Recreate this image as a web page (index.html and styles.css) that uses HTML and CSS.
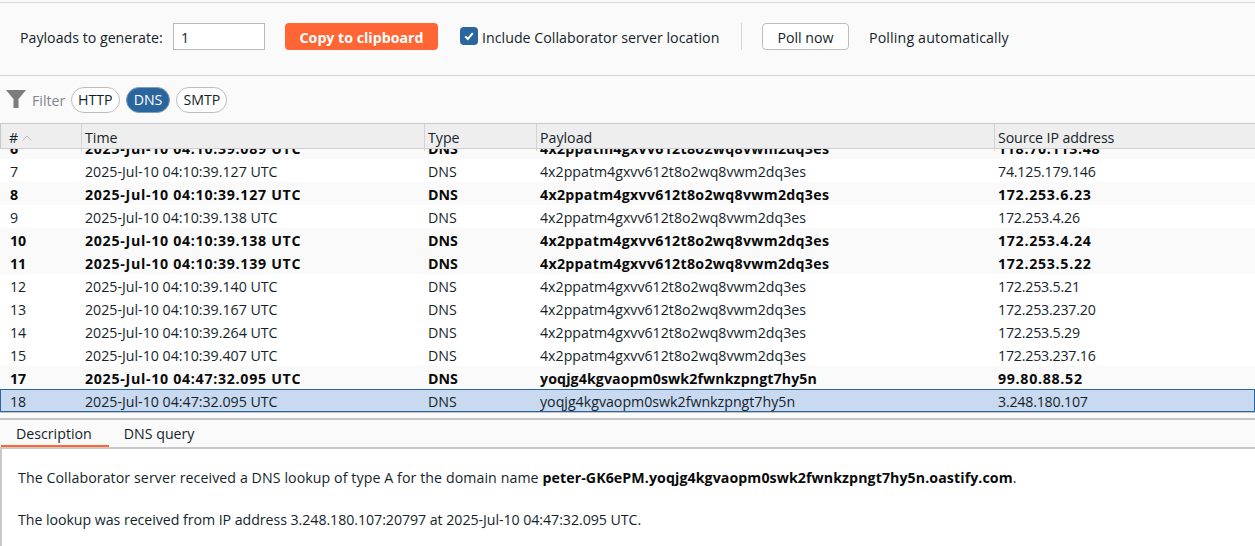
FILE: index.html
```html
<!DOCTYPE html>
<html lang="en">
<head>
    <meta charset="UTF-8">
    <title>Collaborator</title>
    <link rel="stylesheet" href="styles.css">
</head>
<body>
    <div class="toolbar">
        <label class="field-label" for="payloadCount">Payloads to generate:</label>
        <input class="count-input" id="payloadCount" type="text" value="1">
        <button class="copy-btn">Copy to clipboard</button>
        <span class="check-box">
            <svg width="12" height="12" viewBox="0 0 12 12"><path d="M2.2 6.4 L4.8 9 L9.8 3.2" fill="none" stroke="#fff" stroke-width="2"/></svg>
        </span>
        <span class="check-label">Include Collaborator server location</span>
        <span class="divider"></span>
        <button class="poll-btn">Poll now</button>
        <span class="poll-status">Polling automatically</span>
    </div>

    <div class="filter-bar">
        <svg class="filter-icon" width="20" height="20" viewBox="0 0 20 20"><path d="M0 0 H20 L12.5 9 V18 H7.5 V9 Z" fill="#7c7c7c"/></svg>
        <span class="filter-label">Filter</span>
        <span class="pill">HTTP</span>
        <span class="pill pill-on">DNS</span>
        <span class="pill">SMTP</span>
    </div>

    <div class="table">
        <div class="row head">
            <div class="cell">#<svg class="sort-icon" width="10" height="6" viewBox="0 0 10 6"><path d="M0.5 5.5 L5 1 L9.5 5.5" fill="none" stroke="#bbb"/></svg></div>
            <div class="cell">Time</div>
            <div class="cell">Type</div>
            <div class="cell">Payload</div>
            <div class="cell">Source IP address</div>
        </div>
        <div class="table-body">
            <div class="scroller">
                <div class="row bold"><div class="cell">6</div><div class="cell">2025-Jul-10 04:10:39.089 UTC</div><div class="cell">DNS</div><div class="cell">4x2ppatm4gxvv612t8o2wq8vwm2dq3es</div><div class="cell">118.70.113.48</div></div>
                <div class="row"><div class="cell">7</div><div class="cell">2025-Jul-10 04:10:39.127 UTC</div><div class="cell">DNS</div><div class="cell">4x2ppatm4gxvv612t8o2wq8vwm2dq3es</div><div class="cell">74.125.179.146</div></div>
                <div class="row bold"><div class="cell">8</div><div class="cell">2025-Jul-10 04:10:39.127 UTC</div><div class="cell">DNS</div><div class="cell">4x2ppatm4gxvv612t8o2wq8vwm2dq3es</div><div class="cell">172.253.6.23</div></div>
                <div class="row"><div class="cell">9</div><div class="cell">2025-Jul-10 04:10:39.138 UTC</div><div class="cell">DNS</div><div class="cell">4x2ppatm4gxvv612t8o2wq8vwm2dq3es</div><div class="cell">172.253.4.26</div></div>
                <div class="row bold"><div class="cell">10</div><div class="cell">2025-Jul-10 04:10:39.138 UTC</div><div class="cell">DNS</div><div class="cell">4x2ppatm4gxvv612t8o2wq8vwm2dq3es</div><div class="cell">172.253.4.24</div></div>
                <div class="row bold"><div class="cell">11</div><div class="cell">2025-Jul-10 04:10:39.139 UTC</div><div class="cell">DNS</div><div class="cell">4x2ppatm4gxvv612t8o2wq8vwm2dq3es</div><div class="cell">172.253.5.22</div></div>
                <div class="row"><div class="cell">12</div><div class="cell">2025-Jul-10 04:10:39.140 UTC</div><div class="cell">DNS</div><div class="cell">4x2ppatm4gxvv612t8o2wq8vwm2dq3es</div><div class="cell">172.253.5.21</div></div>
                <div class="row"><div class="cell">13</div><div class="cell">2025-Jul-10 04:10:39.167 UTC</div><div class="cell">DNS</div><div class="cell">4x2ppatm4gxvv612t8o2wq8vwm2dq3es</div><div class="cell">172.253.237.20</div></div>
                <div class="row"><div class="cell">14</div><div class="cell">2025-Jul-10 04:10:39.264 UTC</div><div class="cell">DNS</div><div class="cell">4x2ppatm4gxvv612t8o2wq8vwm2dq3es</div><div class="cell">172.253.5.29</div></div>
                <div class="row"><div class="cell">15</div><div class="cell">2025-Jul-10 04:10:39.407 UTC</div><div class="cell">DNS</div><div class="cell">4x2ppatm4gxvv612t8o2wq8vwm2dq3es</div><div class="cell">172.253.237.16</div></div>
                <div class="row bold"><div class="cell">17</div><div class="cell">2025-Jul-10 04:47:32.095 UTC</div><div class="cell">DNS</div><div class="cell short-payload">yoqjg4kgvaopm0swk2fwnkzpngt7hy5n</div><div class="cell">99.80.88.52</div></div>
                <div class="row selected"><div class="cell">18</div><div class="cell">2025-Jul-10 04:47:32.095 UTC</div><div class="cell">DNS</div><div class="cell">yoqjg4kgvaopm0swk2fwnkzpngt7hy5n</div><div class="cell">3.248.180.107</div></div>
            </div>
        </div>
    </div>

    <div class="details">
        <div class="tabs">
            <div class="tab tab-on">Description</div>
            <div class="tab">DNS query</div>
        </div>
        <div class="desc">
            <p>The Collaborator server received a DNS lookup of type A for the domain name <b>peter-GK6ePM.yoqjg4kgvaopm0swk2fwnkzpngt7hy5n.oastify.com</b>.</p>
            <p class="desc-second">The lookup was received from IP address 3.248.180.107:20797 at 2025-Jul-10 04:47:32.095 UTC.</p>
        </div>
    </div>
</body>
</html>
```

FILE: styles.css
```css
* {
    box-sizing: border-box;
}

body {
    margin: 0;
    height: 546px;
    overflow: hidden;
    background-color: #fafafa;
    color: #141f2b;
    font-family: "Open Sans", "Liberation Sans", sans-serif;
    font-size: 14.2px;
}

.toolbar {
    height: 74px;
    margin-top: 2px;
    padding: 20px 0 0 20px;
    border-top: 1px solid #d3dbd9;
    border-bottom: 1px solid #d4d4d4;
    display: flex;
    align-items: flex-start;
}

.field-label {
    width: 153px;
    line-height: 29px;
}

.count-input {
    width: 92px;
    height: 27px;
    padding: 2px 7px 0;
    border: 1px solid #b9b9b9;
    background-color: #fff;
    color: #141f2b;
    font: inherit;
}

.copy-btn {
    width: 153px;
    height: 27px;
    margin-left: 20px;
    padding: 2px 0 0;
    border: 0;
    border-radius: 4px;
    background-color: #ff6633;
    color: #fff;
    font: inherit;
    font-weight: bold;
}

.check-box {
    width: 18px;
    height: 18px;
    margin: 4px 4px 0 22px;
    border-radius: 4px;
    background-color: #2a659e;
    display: flex;
    align-items: center;
    justify-content: center;
}

.check-label {
    width: 237px;
    line-height: 29px;
    white-space: nowrap;
    letter-spacing: 0.03px;
}

.divider {
    width: 1px;
    height: 27px;
    margin: 0 20px 0 22px;
    background-color: #d4d4d4;
}

.poll-btn {
    width: 87px;
    height: 27px;
    padding: 2px 0 0;
    border: 1px solid #bdbdbd;
    border-radius: 4px;
    background-color: #fff;
    color: #141f2b;
    font: inherit;
}

.poll-status {
    margin-left: 20px;
    line-height: 29px;
    letter-spacing: 0.15px;
}

.filter-bar {
    height: 47px;
    padding: 1px 0 0 6px;
    display: flex;
    align-items: center;
}

.filter-icon {
    margin-right: 6px;
}

.filter-label {
    width: 39px;
    color: #7d8790;
}

.pill {
    height: 26px;
    margin-right: 6px;
    padding: 0 6px;
    border: 1px solid #bdbdbd;
    border-radius: 13px;
    background-color: #fff;
    line-height: 24px;
}

.pill-on {
    padding: 0 7px;
    background-color: #2a659e;
    border-color: #7f9fbe;
    color: #fff;
}

.table {
    border-top: 1px solid #c8c8c8;
}

.row {
    display: grid;
    grid-template-columns: 81px 343px 112px 458px 261px;
    height: 23px;
    line-height: 23px;
    background-color: #fff;
}

.cell {
    padding-top: 1px;
    padding-left: 4px;
    white-space: nowrap;
}

.cell:first-child {
    padding-left: 10px;
}

.cell:nth-child(5) {
    letter-spacing: -0.2px;
}

.head {
    height: 25px;
    line-height: 27px;
    background-color: #eeeeee;
    border-left: 1px solid #c8c8c8;
    border-bottom: 1px solid #cfcfcf;
    grid-template-columns: 80px 343px 112px 458px 261px;
}

.head .cell {
    padding-top: 0;
}

.head .cell:first-child {
    padding-left: 8px;
}

.head .cell + .cell {
    padding-left: 3px;
    border-left: 1px solid #d4d4d4;
}

.head .cell:nth-child(5) {
    letter-spacing: -0.1px;
}

.sort-icon {
    margin-left: 4px;
    vertical-align: 2px;
}

.table-body {
    height: 264px;
    overflow: hidden;
    border-bottom: 1px solid #c4c4c4;
}

.scroller {
    margin-top: -13px;
}

.bold {
    background-color: #fafafa;
    font-weight: bold;
    color: #0a0a0a;
}

/* bold digits run wider in the reference font */
.bold .cell:nth-child(2),
.bold .cell:nth-child(5) {
    letter-spacing: 0.7px;
}

.bold .cell:nth-child(4) {
    letter-spacing: 0.29px;
}

.bold .short-payload:nth-child(4) {
    letter-spacing: 0.1px;
}

.selected {
    background-color: #c9d9f0;
    outline: 1px solid #2a659e;
    outline-offset: -1px;
}

.details {
    margin-top: 5px;
    border-top: 2px solid #c4c4c4;
}

.tabs {
    height: 29px;
    display: flex;
    border-bottom: 2px solid #c8c8c8;
    padding-left: 1px;
}

.tab {
    padding: 0 17px 0 15px;
    line-height: 28px;
    height: 27px;
}

.tab-on {
    border-bottom: 2px solid #ff6633;
}

.desc {
    border-left: 2px solid #c8c8c8;
    padding: 19px 0 0 16px;
    height: 100px;
    background-color: #fff;
    letter-spacing: 0.08px;
}

.desc p {
    margin: 0 0 22px;
    line-height: 20px;
}

.desc b {
    color: #0a0a0a;
}

.desc .desc-second {
    letter-spacing: -0.05px;
}
```
